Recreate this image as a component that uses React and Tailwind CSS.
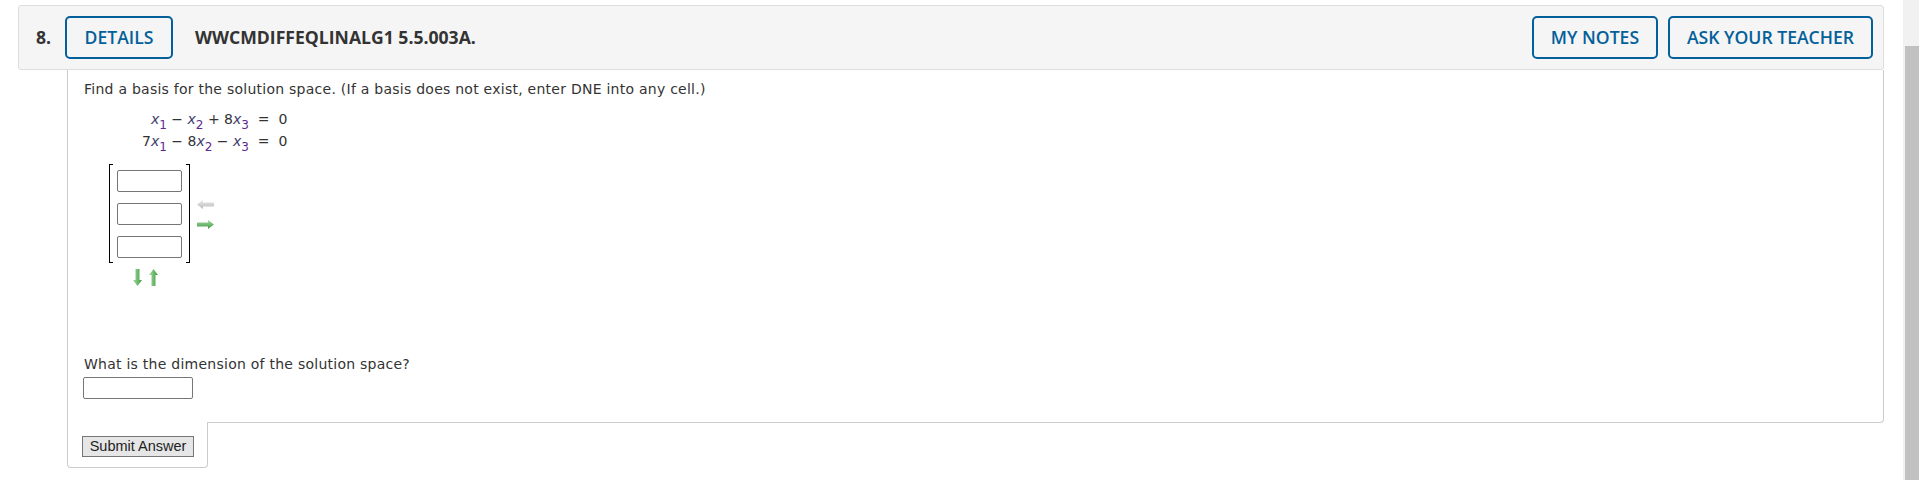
import React from 'react';

const verdana = { fontFamily: '"DejaVu Sans", Verdana, sans-serif' };

function Var({ sub }) {
  return (
    <span>
      <span className="italic text-[#3b3b6b]">x</span>
      <span className="relative top-[5px] text-[12px] text-[#5b2a8e]">{sub}</span>
    </span>
  );
}

function HArrow({ dir = 'right', color = 'green' }) {
  const id = `h-${dir}-${color}`;
  const stops = color === 'green' ? ['#a6dca6', '#3f9a3f'] : ['#ececec', '#b9b9b9'];
  return (
    <svg width="17" height="9" viewBox="0 0 17 9">
      <defs>
        <linearGradient id={id} x1="0" y1="0" x2="0" y2="1">
          <stop offset="0" stopColor={stops[0]} />
          <stop offset="1" stopColor={stops[1]} />
        </linearGradient>
      </defs>
      {dir === 'right' ? (
        <path d="M0 2.5 H11 V0 L17 4.5 L11 9 V6.5 H0 Z" fill={`url(#${id})`} />
      ) : (
        <path d="M17 2.5 H6 V0 L0 4.5 L6 9 V6.5 H17 Z" fill={`url(#${id})`} />
      )}
    </svg>
  );
}

function VArrow({ dir = 'down' }) {
  const id = `v-${dir}`;
  return (
    <svg width="9" height="17" viewBox="0 0 9 17">
      <defs>
        <linearGradient id={id} x1="0" y1="0" x2="1" y2="0">
          <stop offset="0" stopColor="#a6dca6" />
          <stop offset="1" stopColor="#3f9a3f" />
        </linearGradient>
      </defs>
      {dir === 'down' ? (
        <path d="M2.5 0 V11 H0 L4.5 17 L9 11 H6.5 V0 Z" fill={`url(#${id})`} />
      ) : (
        <path d="M2.5 17 V6 H0 L4.5 0 L9 6 H6.5 V17 Z" fill={`url(#${id})`} />
      )}
    </svg>
  );
}

function Cell() {
  return <div className="w-[65px] h-[22px] border border-[#767676] rounded-[2px] bg-white" />;
}

export default function App() {
  return (
    <div className="w-[1919px] h-[480px] flex bg-white overflow-hidden">
      <div className="flex-1 pt-[5px] pl-[18px] pr-[19px]">
        <div
          className="h-[65px] border border-[#dddddd] rounded-[3px] bg-[#f5f5f5] flex items-center pl-[17px] pr-[10px]"
          style={{ fontFamily: '"Open Sans", sans-serif' }}
        >
          <span className="text-[17.6px] font-bold text-[#333333] w-[29px]">8.</span>
          <button className="h-[43px] w-[108px] border-2 border-[#03609a] rounded-[5px] text-[17.6px] font-semibold text-[#03609a]">
            DETAILS
          </button>
          <span className="ml-[22px] text-[17.6px] font-bold text-[#333333]">WWCMDIFFEQLINALG1 5.5.003A.</span>
          <div className="ml-auto flex gap-[10px]">
            <button className="h-[43px] w-[126px] border-2 border-[#03609a] rounded-[5px] text-[17.6px] font-semibold text-[#03609a]">
              MY NOTES
            </button>
            <button className="h-[43px] w-[205px] border-2 border-[#03609a] rounded-[5px] text-[17.6px] font-semibold text-[#03609a]">
              ASK YOUR TEACHER
            </button>
          </div>
        </div>

        <div className="ml-[49px]" style={verdana}>
          <div className="border-l border-r border-b border-[#cccccc] rounded-br-[4px] pl-[16px] pt-[11px] pb-[23px] text-[14px] tracking-[0.25px] text-[#333333]">
            <p className="leading-[16px]">
              Find a basis for the solution space. (If a basis does not exist, enter DNE into any cell.)
            </p>
            <div className="ml-[58px] mt-[11px] inline-flex flex-col items-end leading-[22px] text-[14px] tracking-normal text-[#333333]">
              <div className="whitespace-pre">
                <Var sub="1" /> − <Var sub="2" /> + 8<Var sub="3" />  =  0
              </div>
              <div className="whitespace-pre -mt-[1px]">
                7<Var sub="1" /> − 8<Var sub="2" /> − <Var sub="3" />  =  0
              </div>
            </div>

            <div className="flex items-center ml-[25px] mt-[11px]">
              <div className="w-[4px] h-[99px] border-l border-t border-b border-black" />
              <div className="flex flex-col gap-[11px] mx-[4px]">
                <Cell />
                <Cell />
                <Cell />
              </div>
              <div className="w-[4px] h-[99px] border-r border-t border-b border-black" />
              <div className="flex flex-col gap-[11px] ml-[7px] pt-[2px]">
                <HArrow dir="left" color="gray" />
                <HArrow dir="right" color="green" />
              </div>
            </div>
            <div className="flex gap-[7px] ml-[49px] mt-[6px]">
              <VArrow dir="down" />
              <VArrow dir="up" />
            </div>

            <p className="mt-[70px] leading-[16px]">What is the dimension of the solution space?</p>
            <div className="-ml-[1px] mt-[5px] w-[110px] h-[22px] border border-[#767676] rounded-[2px] bg-white" />
          </div>
          <div className="relative -mt-px w-[141px] bg-white border-l border-r border-b border-[#cccccc] rounded-b-[4px] pl-[14px] pt-[12px] pb-[9px]">
            <button
              className="h-[21px] w-[112px] border border-[#767676] bg-[#e6e6e6] text-[14.5px] leading-[19px] text-[#222222]"
              style={{ fontFamily: '"Liberation Sans", Arial, sans-serif' }}
            >
              Submit Answer
            </button>
          </div>
        </div>
      </div>
      <div className="w-[16px] h-[480px] bg-[#f1f1f1] flex flex-col">
        <div className="ml-[2px] mt-[46px] flex-1 bg-[#c1c1c1]" />
      </div>
    </div>
  );
}
